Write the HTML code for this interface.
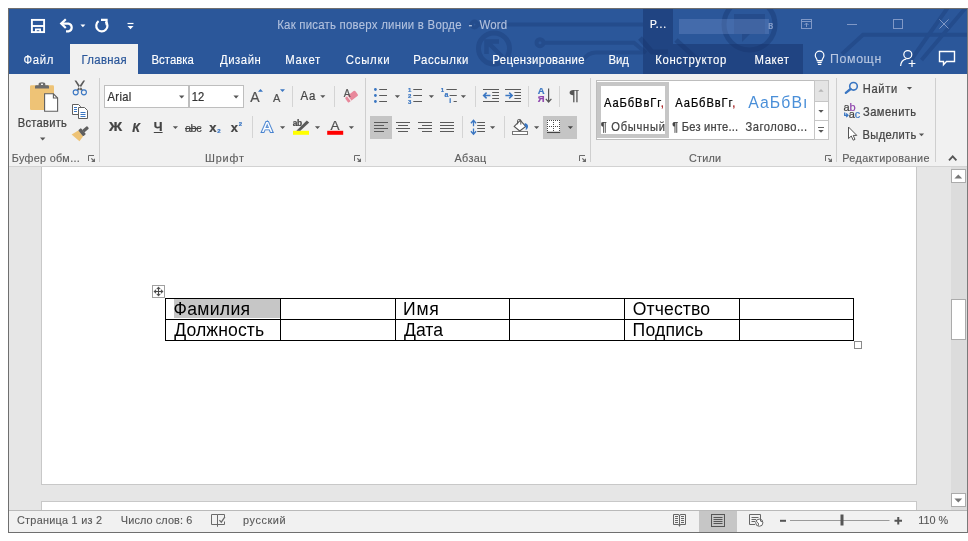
<!DOCTYPE html>
<html lang="ru">
<head>
<meta charset="utf-8">
<title>Как писать поверх линии в Ворде - Word</title>
<style>
html,body{margin:0;padding:0;background:#fff;}
body{width:968px;height:541px;position:relative;overflow:hidden;font-family:"Liberation Sans",sans-serif;}
.a{position:absolute;}
.t{position:absolute;white-space:nowrap;line-height:20px;height:20px;-webkit-text-stroke:0.22px;}
#win{position:absolute;left:8px;top:8px;width:958px;height:523px;border:1px solid #6f6f6f;border-right-color:#7a7a7a;background:#e6e6e6;}
#title{position:absolute;left:9px;top:9px;width:958px;height:65px;background:#2b579a;overflow:hidden;}
#ctx{position:absolute;left:643px;top:44px;width:160px;height:30px;background:rgba(22,50,105,.5);}
#ctx2{position:absolute;left:643px;top:9px;width:30px;height:35px;background:rgba(22,50,105,.5);}
#tab{position:absolute;left:70px;top:44px;width:68px;height:31px;background:#f1f1f1;}
#ribbon{position:absolute;left:9px;top:74px;width:958px;height:92px;background:#f1f1f1;border-bottom:1px solid #d2d2d2;}
.vs{position:absolute;width:1px;background:#d4d4d4;}
.gs{position:absolute;width:1px;background:#cfcfcf;top:78px;height:84px;}
#doc{position:absolute;left:9px;top:167px;width:958px;height:343px;background:#e6e6e6;overflow:hidden;}
#status{position:absolute;left:9px;top:510px;width:958px;height:21px;background:#f1f1f1;border-top:1px solid #b9b9b9;}
.sel{position:absolute;background:#c5c5c5;}
svg{position:absolute;overflow:visible;}
.dd{position:absolute;width:0;height:0;border-left:3px solid transparent;border-right:3px solid transparent;border-top:3px solid #666;}
</style>
</head>
<body>
<div id="win"></div>
<div id="title"><svg class="a" style="left:-9px;top:-9px;" width="968" height="541" viewBox="0 0 968 541">
  <g fill="none" stroke="#1b3d7a" opacity=".42" stroke-width="4">
    <circle cx="474.5" cy="24.5" r="3"/>
    <path d="M478 24.500H643"/>
    <circle cx="494" cy="48.500" r="15.500" stroke-width="5"/>
    <path d="M502.500 57L488 42.500M486.500 54V41.500H499" stroke-width="4.500"/>
    <circle cx="540" cy="42.700" r="3.500"/>
    <path d="M544 42.700H634L646 53"/>
    <path d="M583 60Q588 52.500 596 52.500H643"/>
    <path d="M967 34.800H863L842 54"/>
    <path d="M947.500 8L911 60M965.500 8L921.500 60"/>
  </g>
  <g fill="none" stroke="#16356e" opacity=".4" stroke-width="5">
    <circle cx="749.500" cy="24.500" r="25.500"/>
    <path d="M640 38L652 52H668M676 40L700 62"/>
  </g>
  <path d="M734 14H765V34H750L742 42V34H734Z" fill="#16356e" fill-opacity=".3"/>
</svg>
</div>
<div id="ctx"></div><div id="ctx2"></div>
<div class="a" style="left:679px;top:19px;width:90px;height:15px;background:rgba(120,150,205,.33);"></div>
<div id="tab"></div>
<div id="ribbon"></div>
<svg class="a" style="left:0;top:0;" width="968" height="541" viewBox="0 0 968 541">
  <!-- save -->
  <g fill="none" stroke="#fff" stroke-width="1.9">
    <rect x="31.900" y="19.900" width="12.200" height="12.200"/>
    <path d="M32 26H44"/>
  </g>
  <path d="M35 28.5H41V32.5H39.3V30.2H36.7V32.5H35Z" fill="#fff"/>
  <!-- undo -->
  <path d="M65.8 19.2L61.2 23.6L65.8 28" fill="none" stroke="#fff" stroke-width="2.2" stroke-linejoin="miter"/>
  <path d="M61.8 23.6H68.6A4 4 0 0 1 68.6 31.4H66" fill="none" stroke="#fff" stroke-width="2.2"/>
  <path d="M80.4 24.4h5l-2.5 2.8z" fill="#fff"/>
  <!-- redo / repeat -->
  <path d="M98.6 21.2A5.6 5.6 0 1 0 105.6 21.6" fill="none" stroke="#fff" stroke-width="2.2"/>
  <path d="M101 19.9H106.6V25.2" fill="none" stroke="#fff" stroke-width="2.1"/>
  <!-- customize -->
  <path d="M127.5 23.5H133.5" stroke="#fff" stroke-width="1.2"/>
  <path d="M127.5 26h6l-3 3.2z" fill="#fff"/>
  <!-- window controls -->
  <g fill="none" stroke="#8098c6" stroke-width="1">
    <rect x="801.5" y="19.5" width="10" height="9"/>
    <path d="M801.5 21.5H811.5M806.5 27V23M804.5 25L806.5 23L808.5 25"/>
    <path d="M847 24.5H857"/>
    <rect x="893.5" y="19.5" width="9" height="9"/>
    <path d="M939.5 19.5L948.5 28.5M948.5 19.5L939.5 28.5"/>
  </g>
  <!-- lightbulb -->
  <g fill="none" stroke="#fff" stroke-width="1.2">
    <path d="M817.2 60.6C817.2 58.6 815.3 57.8 815.3 55.4A4.3 4.3 0 0 1 823.9 55.4C823.9 57.8 822 58.6 822 60.6Z"/>
    <path d="M817.4 62.4H821.8M817.9 64.3H821.3"/>
  </g>
  <!-- share (person+) -->
  <g fill="none" stroke="#fff" stroke-width="1.200">
    <circle cx="907.8" cy="54.6" r="4"/>
    <path d="M900.6 66C900.8 62 903.6 59.4 906.4 58.8"/>
    <path d="M908.6 63.5H915.4M912 60.1V66.9"/>
  </g>
  <!-- comment -->
  <path d="M939.5 51.5H954.5V61.5H946.5L943.5 64.8V61.5H939.5Z" fill="none" stroke="#fff" stroke-width="1.4" stroke-linejoin="miter"/>
</svg>

<!-- group separators -->
<div class="gs" style="left:99px;"></div>
<div class="gs" style="left:365px;"></div>
<div class="gs" style="left:590px;"></div>
<div class="gs" style="left:836px;"></div>
<div class="gs" style="left:935px;"></div>
<!-- small separators -->
<div class="vs" style="left:292px;top:86px;height:21px;"></div>
<div class="vs" style="left:334px;top:86px;height:21px;"></div>
<div class="vs" style="left:252px;top:116px;height:22px;"></div>
<div class="vs" style="left:475px;top:86px;height:21px;"></div>
<div class="vs" style="left:528px;top:86px;height:21px;"></div>
<div class="vs" style="left:559px;top:86px;height:21px;"></div>
<div class="vs" style="left:462px;top:116px;height:22px;"></div>
<div class="vs" style="left:504px;top:116px;height:22px;"></div>
<!-- font boxes -->
<div class="a" style="left:104px;top:85px;width:83px;height:21px;background:#fff;border:1px solid #bebebe;"></div>
<div class="a" style="left:189px;top:85px;width:53px;height:21px;background:#fff;border:1px solid #bebebe;"></div>
<!-- selected buttons -->
<div class="sel" style="left:370px;top:116px;width:22px;height:23px;"></div>
<div class="sel" style="left:543px;top:116px;width:34px;height:23px;"></div>
<!-- styles gallery -->
<div class="a" style="left:596px;top:80px;width:231px;height:58px;background:#fff;border:1px solid #bdbdbd;"></div>
<div class="a" style="left:597.300px;top:82px;width:71.500px;height:55.600px;background:#c6c6c6;"></div><div class="a" style="left:601px;top:86px;width:64.200px;height:48px;background:#fff;"></div>
<div class="a" style="left:814px;top:80px;width:13px;height:20px;background:#e4e4e4;border:1px solid #c6c6c6;"></div>
<div class="a" style="left:814px;top:101px;width:13px;height:18px;background:#fff;border:1px solid #c6c6c6;"></div>
<div class="a" style="left:814px;top:120px;width:13px;height:18px;background:#fff;border:1px solid #c6c6c6;"></div>
<svg class="a" style="left:0;top:0;" width="968" height="541" viewBox="0 0 968 541">
  <!-- paste -->
  <rect x="30" y="85.3" width="24" height="24.7" rx="1.2" fill="#eec376"/>
  <path d="M35 88.6V86.6Q35 85.3 36.3 85.3H38.6V84Q38.6 82.3 42 82.3Q45.3 82.3 45.3 84V85.3H47.7Q49 85.3 49 86.6V88.6Z" fill="#6b6b6b"/>
  <rect x="41" y="83.600" width="2" height="1.400" fill="#f1f1f1"/>
  <path d="M44.6 93.8H53.4L57.6 98V111.3H44.6Z" fill="#fff" stroke="#5f5f5f" stroke-width="1.1"/>
  <path d="M53.4 93.8V98H57.6" fill="none" stroke="#5f5f5f" stroke-width="1.1"/>
  <path d="M40 137.6h5.4l-2.7 2.8z" fill="#565656"/>
  <!-- scissors -->
  <path d="M74.500 80.400H76.300L82.700 89.700L80.700 90.600ZM85.100 80.400H83.300L76.900 89.700L78.900 90.600Z" fill="#5a5a5a"/>
  <circle cx="75.700" cy="92.300" r="2.500" fill="none" stroke="#3a76c2" stroke-width="1.150"/>
  <circle cx="83.900" cy="92.300" r="2.500" fill="none" stroke="#3a76c2" stroke-width="1.150"/>
  <!-- copy -->
  <path d="M72.5 104.5H78.5L80.5 106.5V114.5H72.5Z" fill="#fff" stroke="#5f5f5f"/>
  <path d="M78.5 107.5H84.5L87.5 110.5V118.5H78.5Z" fill="#fff" stroke="#5f5f5f"/>
  <path d="M74 107.5H77M74 109.5H77M74 111.5H77M80.5 112.5H85.5M80.5 114.5H85.5M80.5 116.5H85.5" stroke="#3a76c2" stroke-width="1" fill="none"/>
  <!-- format painter -->
  <g transform="translate(81.100 133) rotate(-40)">
    <path d="M-.500-3.800L-8.200-5L-6.600 5.300L-.500 3.800Z" fill="#eec376"/>
    <rect x="-.600" y="-4" width="3.600" height="8" rx="1" fill="#5f5f5f"/>
    <rect x="2.800" y="-1.600" width="6.200" height="3.200" rx=".8" fill="#5f5f5f"/>
  </g>
  <!-- font box arrows -->
  <path d="M179 95.6h5.4l-2.7 2.8z" fill="#565656"/>
  <path d="M233.4 95.6h5.4l-2.7 2.8z" fill="#565656"/>
  <!-- grow / shrink font -->
  <path d="M258 91.7l2.5-2.8l2.5 2.8z" fill="#3a76c2"/>
  <path d="M280 89.2h5l-2.5 2.8z" fill="#3a76c2"/>
  <!-- Aa arrow -->
  <path d="M320.2 95.2h5.2l-2.6 2.8z" fill="#565656"/>
  <!-- clear formatting -->
  <g transform="rotate(-38 351.600 96.600)"><rect x="345.300" y="93.500" width="12.600" height="6.200" rx="1.300" fill="#e8889b"/><path d="M348.600 93.500V99.700" stroke="#f1f1f1" stroke-width="1"/></g>
  <!-- U arrow -->
  <path d="M172.8 126.2h5.2l-2.6 2.8z" fill="#565656"/>
  <!-- text effects arrow etc -->
  <path d="M280 126.2h5.2l-2.6 2.8z" fill="#565656"/>
  <path d="M314.9 126.2h5.2l-2.6 2.8z" fill="#565656"/>
  <path d="M348.8 126.2h5.2l-2.6 2.8z" fill="#565656"/>
  <!-- highlight -->
  <rect x="293" y="130.8" width="16" height="4" fill="#ffff00"/>
  <path d="M306.800 120.400L309.200 122.600L300.400 130.800H296.400Z" fill="#5a5a5a"/>
  <!-- font color bar -->
  <rect x="327.2" y="130.8" width="16" height="4" fill="#ff0000"/>
  <!-- launchers -->
  <path d="M88.5 161V155.500H94" stroke="#6a6a6a" fill="none"/><path d="M95 158.200V162H91.2Z" fill="#6a6a6a"/><path d="M91.3 158.300L93.5 160.500" stroke="#6a6a6a" stroke-width="1.100"/>
  <path d="M354.5 161V155.500H360" stroke="#6a6a6a" fill="none"/><path d="M361 158.200V162H357.2Z" fill="#6a6a6a"/><path d="M357.3 158.300L359.5 160.500" stroke="#6a6a6a" stroke-width="1.100"/>
  <path d="M579.5 161V155.500H585" stroke="#6a6a6a" fill="none"/><path d="M586 158.200V162H582.2Z" fill="#6a6a6a"/><path d="M582.3 158.300L584.5 160.500" stroke="#6a6a6a" stroke-width="1.100"/>
  <path d="M825.5 161V155.500H831" stroke="#6a6a6a" fill="none"/><path d="M832 158.200V162H828.2Z" fill="#6a6a6a"/><path d="M828.3 158.300L830.5 160.500" stroke="#6a6a6a" stroke-width="1.100"/>
  <!-- bullets -->
  <g fill="#3a76c2"><circle cx="375.4" cy="89.5" r="1.4"/><circle cx="375.4" cy="95.5" r="1.4"/><circle cx="375.4" cy="101.5" r="1.4"/></g>
  <path d="M379.2 89.5H387M379.2 95.5H387M379.2 101.5H387" stroke="#5a5a5a" stroke-width="1.1"/>
  <path d="M394.8 95.2h5.2l-2.6 2.8z" fill="#565656"/>
  <!-- numbering -->
  <path d="M413.3 89.5H422M413.3 95.5H422M413.3 101.5H422" stroke="#5a5a5a" stroke-width="1.1"/>
  <path d="M428.8 95.2h5.2l-2.6 2.8z" fill="#565656"/>
  <!-- multilevel -->
  <path d="M446.4 89.5H456.8M449.6 95.5H456.8M453.6 101.5H456.8" stroke="#5a5a5a" stroke-width="1.1"/>
  <path d="M460.8 95.2h5.2l-2.6 2.8z" fill="#565656"/>
  <!-- indent decrease -->
  <path d="M483 89.5H499M492.2 92.5H499M492.2 95.5H499M492.2 98.5H499M483 101.5H499" stroke="#5a5a5a" stroke-width="1.1"/>
  <path d="M483.6 95.5H490.4M486.6 92.6L483.6 95.5L486.6 98.4" stroke="#3a76c2" stroke-width="1.5" fill="none"/>
  <!-- indent increase -->
  <path d="M505 89.5H521M514.4 92.5H521M514.4 95.5H521M514.4 98.5H521M505 101.5H521" stroke="#5a5a5a" stroke-width="1.1"/>
  <path d="M505.4 95.5H512.2M509.2 92.6L512.2 95.5L509.2 98.4" stroke="#3a76c2" stroke-width="1.5" fill="none"/>
  <!-- sort arrow -->
  <path d="M548.6 88.4V102M545.8 98.8L548.6 102L551.4 98.8" stroke="#555" stroke-width="1.2" fill="none"/>
  <!-- align left -->
  <path d="M374 122.5H388M374 125.5H384M374 128.5H388M374 131.5H384" stroke="#5a5a5a" stroke-width="1.2"/>
  <path d="M396 122.5H410M398 125.5H408M396 128.5H410M398 131.5H408" stroke="#5a5a5a" stroke-width="1.2"/>
  <path d="M418 122.5H432M422 125.5H432M418 128.5H432M422 131.5H432" stroke="#5a5a5a" stroke-width="1.2"/>
  <path d="M440 122.5H454M440 125.5H454M440 128.5H454M440 131.5H454" stroke="#5a5a5a" stroke-width="1.2"/>
  <!-- line spacing -->
  <path d="M473.500 120.400V126.200M473.500 128.400V134M470.900 123.200L473.500 120.200L476.100 123.200M470.900 131.200L473.500 134.200L476.100 131.200" stroke="#3a76c2" stroke-width="1.300" fill="none"/>
  <path d="M477.2 122.5H485M477.2 125.5H485M477.2 128.5H485M477.2 131.5H485" stroke="#5a5a5a" stroke-width="1.2"/>
  <path d="M490 126.2h5.2l-2.6 2.8z" fill="#565656"/>
  <!-- shading -->
  <rect x="512.500" y="131.500" width="15" height="3" fill="#fff" stroke="#777" stroke-width="1"/>
  <path d="M520.300 120.400L525.700 126.500L519.700 131L514.200 126.400Z" fill="#fff" stroke="#555" stroke-width="1.100"/>
  <path d="M517.600 124.300V120.600Q517.600 119.500 518.600 119.500H519.800Q520.800 119.500 520.800 120.600V124.600" fill="none" stroke="#555" stroke-width="1"/>
  <path d="M524.900 122.900Q528.800 124.200 527.900 127.400Q527.200 129.400 525.600 130Q526.600 127 524.300 125.300Z" fill="#3a76c2"/>
  <path d="M534 126.200h5.200l-2.600 2.800z" fill="#565656"/>
  <!-- borders -->
  <rect x="547" y="120" width="13" height="12" fill="#fff"/>
  <g stroke="#4a4a4a" stroke-width="1" stroke-dasharray="1 1" fill="none" shape-rendering="crispEdges">
    <path d="M547 120.500H560M547 126.500H560M547.500 120V132M553.500 120V132M559.500 120V132"/>
  </g>
  <path d="M547 132.400H560.200" stroke="#444" stroke-width="1.300"/>
  <path d="M567.800 126.200h5.200l-2.600 2.800z" fill="#444"/>
  <!-- gallery scroll -->
  <path d="M818.300 91.800l2.700-2.800l2.700 2.800z" fill="#b5b5b5"/>
  <path d="M818.300 110h5.400l-2.700 2.800z" fill="#565656"/>
  <path d="M818 127.500H824" stroke="#666" stroke-width="1"/>
  <path d="M818.300 130h5.400l-2.700 2.800z" fill="#565656"/>
  <!-- find -->
  <circle cx="853.500" cy="86.300" r="3.800" fill="none" stroke="#3a76c2" stroke-width="1.600"/>
  <path d="M850.600 89L845.800 92.800" stroke="#3a76c2" stroke-width="2.300" stroke-linecap="round"/>
  <path d="M906.9 87h5.2l-2.6 2.8z" fill="#565656"/>
  <!-- replace arrow -->
  <path d="M844.700 112.600V115.300H847.600M846.200 113.500L848 115.300L846.200 117.100" stroke="#3a76c2" stroke-width="1.300" fill="none"/>
  <!-- select cursor -->
  <path d="M848.5 127V138.6L851.3 136L853.2 140.2L855 139.4L853.2 135.4H856.8Z" fill="#fff" stroke="#555" stroke-width="1"/>
  <path d="M918.9 133.4h5.2l-2.6 2.8z" fill="#565656"/>
  <!-- collapse chevron -->
  <path d="M949 160.4L952.7 156.4L956.4 160.4" fill="none" stroke="#555" stroke-width="1.8"/>
</svg>

<div id="doc">
  <div class="a" style="left:32px;top:-1px;width:874px;height:317px;background:#fff;border:1px solid #c8c8c8;"></div>
  <div class="a" style="left:32px;top:334px;width:874px;height:30px;background:#fff;border:1px solid #c8c8c8;"></div>
  <!-- scrollbar -->
  <div class="a" style="left:942px;top:0;width:16px;height:343px;background:#dcdcdc;"></div>
  <div class="a" style="left:942px;top:2px;width:13px;height:12px;background:#fff;border:1px solid #ababab;"></div>
  <div class="a" style="left:942px;top:132px;width:13px;height:39px;background:#fff;border:1px solid #ababab;"></div>
  <div class="a" style="left:942px;top:326px;width:13px;height:12px;background:#fff;border:1px solid #ababab;"></div>
</div>
<!-- table -->
<div class="a" style="left:174px;top:299px;width:106px;height:19px;background:#c6c6c6;"></div>
<svg class="a" style="left:0;top:0;" width="968" height="541" viewBox="0 0 968 541">
  <g stroke="#000" stroke-width="1" fill="none" shape-rendering="crispEdges">
    <path d="M165.5 298.5H853.5V340.5H165.5ZM165.5 319.5H853.5M280.5 298.5V340.5M395.5 298.5V340.5M509.5 298.5V340.5M624.5 298.5V340.5M739.5 298.5V340.5"/>
  </g>
  <rect x="152.5" y="285.5" width="12" height="12" fill="#fff" stroke="#a0a0a0"/>
  <path d="M154.500 291.500H162.500M158.500 287.500V295.500" stroke="#4a4a4a" stroke-width="1.100" fill="none"/>
  <path d="M158.500 286.700l-1.900 2.200h3.800zM158.500 296.300l-1.900-2.200h3.800zM153.700 291.500l2.200-1.900v3.800zM163.300 291.500l-2.200-1.900v3.800z" fill="#4a4a4a" stroke="#4a4a4a" stroke-width=".3"/>
  <rect x="854.5" y="341.5" width="7" height="7" fill="#fff" stroke="#8a8a8a"/>
</svg>
<div id="status"></div>
<div class="sel" style="left:699px;top:511px;width:38px;height:21px;background:#c6c6c6;"></div>
<svg class="a" style="left:0;top:0;" width="968" height="541" viewBox="0 0 968 541">
  <!-- scroll arrows -->
  <path d="M954.400 178.400l3.900-4l3.900 4z" fill="#777"/>
  <path d="M954.400 498.400h7.800l-3.900 4z" fill="#777"/>
  <!-- proofing -->
  <g fill="none" stroke="#6a6a6a" stroke-width="1">
    <path d="M217.500 524.500H211.500V514.500H217.500M217.500 514.500V526.800M217.500 514.500H224.500V517M224.500 521.500V524.500H217.500"/>
    <path d="M219.400 520.200L221.300 522.200L224.900 516.900" stroke-width="1.200"/>
  </g>
  <!-- read mode -->
  <g fill="none" stroke="#666" stroke-width="1">
    <path d="M679.5 516V526.5M673.5 514.5H678Q679.5 514.5 679.5 516Q679.5 514.5 681 514.5H685.500V524.5H681Q679.5 524.5 679.5 526Q679.5 524.5 678 524.5H673.5Z"/>
    <path d="M675 516.500H678M675 518.500H678M675 520.500H678M675 522.500H678M681 516.500H684M681 518.500H684M681 520.500H684M681 522.500H684"/>
  </g>
  <!-- print layout -->
  <g fill="none" stroke="#555" stroke-width="1">
    <rect x="711.5" y="514.5" width="13" height="12"/>
    <path d="M713.5 517.5H722.5M713.5 519.5H722.5M713.5 521.5H722.5M713.5 523.5H722.5"/>
  </g>
  <!-- web layout -->
  <g fill="none" stroke="#666" stroke-width="1">
    <path d="M755 524.5H749.500V514.5H760.5V519"/>
    <path d="M751.5 517.5H758.5M751.5 519.5H756M751.5 521.5H755"/>
    <circle cx="759.300" cy="522.700" r="3.600" fill="#fff"/>
    <path d="M756.5 521.5Q759 522.5 758.500 525.500M760.5 519.5Q759.500 521.5 762.5 522"/>
  </g>
  <!-- zoom -->
  <path d="M780 520.800H786" stroke="#555" stroke-width="2"/>
  <path d="M790 520.5H889.500" stroke="#9a9a9a" stroke-width="1"/>
  <rect x="840.5" y="514.5" width="3" height="11" fill="#555"/>
  <path d="M894.5 520.800H902M898.250 517V524.600" stroke="#555" stroke-width="2"/>
</svg>

<div id="tx" style="position:absolute;left:0;top:0;width:968px;height:541px;will-change:transform;">
<span class="t" style="left:23.55px;top:49.50px;font-size:11.35px;color:#fff;letter-spacing:0.650px;-webkit-text-stroke:0.12px;transform:scaleY(1.0753);">Файл</span>
<span class="t" style="left:81.50px;top:49.50px;font-size:11.35px;color:#2b579a;letter-spacing:0.317px;-webkit-text-stroke:0.2px;transform:scaleY(1.0753);">Главная</span>
<span class="t" style="left:151.50px;top:49.50px;font-size:11.35px;color:#fff;letter-spacing:0.025px;-webkit-text-stroke:0.12px;transform:scaleY(1.0753);">Вставка</span>
<span class="t" style="left:220.00px;top:49.50px;font-size:11.35px;color:#fff;letter-spacing:0.550px;-webkit-text-stroke:0.12px;transform:scaleY(1.0753);">Дизайн</span>
<span class="t" style="left:285.30px;top:49.50px;font-size:11.35px;color:#fff;letter-spacing:0.712px;-webkit-text-stroke:0.12px;transform:scaleY(1.0753);">Макет</span>
<span class="t" style="left:345.80px;top:49.50px;font-size:11.35px;color:#fff;letter-spacing:0.750px;-webkit-text-stroke:0.12px;transform:scaleY(1.0753);">Ссылки</span>
<span class="t" style="left:413.30px;top:49.50px;font-size:11.35px;color:#fff;letter-spacing:0.586px;-webkit-text-stroke:0.12px;transform:scaleY(1.0753);">Рассылки</span>
<span class="t" style="left:492.30px;top:49.50px;font-size:11.35px;color:#fff;letter-spacing:0.365px;-webkit-text-stroke:0.12px;transform:scaleY(1.0753);">Рецензирование</span>
<span class="t" style="left:608.50px;top:49.50px;font-size:11.35px;color:#fff;letter-spacing:-0.050px;-webkit-text-stroke:0.12px;transform:scaleY(1.0753);">Вид</span>
<span class="t" style="left:655.30px;top:49.50px;font-size:11.35px;color:#fff;letter-spacing:0.625px;-webkit-text-stroke:0.12px;transform:scaleY(1.0753);">Конструктор</span>
<span class="t" style="left:754.50px;top:49.50px;font-size:11.35px;color:#fff;letter-spacing:0.600px;-webkit-text-stroke:0.12px;transform:scaleY(1.0753);">Макет</span>
<span class="t" style="left:830.10px;top:49.30px;font-size:12.4px;color:#b9c7e1;letter-spacing:0.580px;-webkit-text-stroke:0.1px;">Помощн</span>
<span class="t" style="left:277.20px;top:15.30px;font-size:11.44px;color:#b3c2de;letter-spacing:0.222px;white-space:pre;-webkit-text-stroke:0.1px;transform:scaleY(1.0753);">Как писать поверх линии в Ворде  -  Word</span>
<span class="t" style="left:649.95px;top:15.20px;font-size:10.23px;color:#fff;letter-spacing:0.917px;transform:scaleY(1.0753);">Р...</span>
<span class="t" style="left:768.25px;top:16.00px;font-size:9.3px;color:#8da2cb;letter-spacing:0.000px;transform:scaleY(1.0753);">в</span>
<span class="t" style="left:17.80px;top:113.00px;font-size:11.16px;color:#444;letter-spacing:0.250px;transform:scaleY(1.0753);">Вставить</span>
<span class="t" style="left:11.75px;top:148.10px;font-size:10.8px;color:#5e5e5e;letter-spacing:0.332px;-webkit-text-stroke:0.15px;transform:none;">Буфер обм...</span>
<span class="t" style="left:107.50px;top:87.00px;font-size:11.16px;color:#333;letter-spacing:0.375px;transform:scaleY(1.0753);">Arial</span>
<span class="t" style="left:191.75px;top:87.00px;font-size:11.16px;color:#333;letter-spacing:0.150px;transform:scaleY(1.0753);">12</span>
<span class="t" style="left:204.95px;top:148.10px;font-size:10.8px;color:#5e5e5e;letter-spacing:0.875px;-webkit-text-stroke:0.15px;transform:none;">Шрифт</span>
<span class="t" style="left:454.50px;top:148.10px;font-size:10.8px;color:#5e5e5e;letter-spacing:0.375px;-webkit-text-stroke:0.15px;transform:none;">Абзац</span>
<span class="t" style="left:689.00px;top:148.10px;font-size:10.8px;color:#5e5e5e;letter-spacing:0.225px;-webkit-text-stroke:0.15px;transform:none;">Стили</span>
<span class="t" style="left:842.25px;top:148.10px;font-size:10.8px;color:#5e5e5e;letter-spacing:0.385px;-webkit-text-stroke:0.15px;transform:none;">Редактирование</span>
<span class="t" style="left:862.80px;top:78.70px;font-size:11.16px;color:#444;letter-spacing:0.625px;transform:scaleY(1.0753);">Найти</span>
<span class="t" style="left:863.00px;top:101.90px;font-size:11.16px;color:#444;letter-spacing:0.436px;transform:scaleY(1.0753);">Заменить</span>
<span class="t" style="left:862.50px;top:124.80px;font-size:11.16px;color:#444;letter-spacing:0.343px;transform:scaleY(1.0753);">Выделить</span>
<span class="t" style="left:604.00px;top:92.50px;font-size:11.16px;color:#000;letter-spacing:0.894px;transform:scaleY(1.0753);">АаБбВвГг<span style="color:#a31515">,</span></span>
<span class="t" style="left:675.30px;top:92.50px;font-size:11.16px;color:#000;letter-spacing:0.906px;transform:scaleY(1.0753);">АаБбВвГг<span style="color:#a31515">,</span></span>
<span class="t" style="left:748.20px;top:92.60px;font-size:15.81px;color:#4a8fd8;letter-spacing:1.090px;-webkit-text-stroke:0;transform:scaleY(1.0753);">АаБбВı</span>
<span class="t" style="left:600.80px;top:117.00px;font-size:11.16px;color:#444;letter-spacing:0.719px;transform:scaleY(1.0753);">¶ Обычный</span>
<span class="t" style="left:672.30px;top:117.00px;font-size:11.16px;color:#444;letter-spacing:0.196px;transform:scaleY(1.0753);">¶ Без инте...</span>
<span class="t" style="left:745.50px;top:116.80px;font-size:11.16px;color:#444;letter-spacing:0.480px;transform:scaleY(1.0753);">Заголово...</span>
<span class="t" style="left:108.50px;top:117.20px;font-size:12.5px;color:#444;letter-spacing:0.000px;font-weight:bold;transform:scaleX(1.16);transform-origin:0 50%;">Ж</span>
<span class="t" style="left:132.25px;top:117.50px;font-size:12.5px;color:#444;letter-spacing:0.000px;font-weight:bold;font-style:italic;">К</span>
<span class="t" style="left:153.80px;top:117.00px;font-size:12.5px;color:#444;letter-spacing:0.000px;font-weight:bold;text-decoration:underline;">Ч</span>
<span class="t" style="left:185.00px;top:117.50px;font-size:11px;color:#444;letter-spacing:-0.550px;text-decoration:line-through;">abc</span>
<span class="t" style="left:209.25px;top:117.50px;font-size:13px;color:#444;letter-spacing:0.000px;font-weight:bold;">x</span>
<span class="t" style="left:230.75px;top:117.50px;font-size:13px;color:#444;letter-spacing:0.000px;font-weight:bold;">x</span>
<span class="t" style="left:300.40px;top:86.00px;font-size:11.44px;color:#444;letter-spacing:0.950px;transform:scaleY(1.0753);">Aa</span>
<span class="t" style="left:17.00px;top:509.70px;font-size:10.88px;color:#585858;letter-spacing:0.257px;-webkit-text-stroke:0.12px;transform:scaleY(1.0753);">Страница 1 из 2</span>
<span class="t" style="left:120.85px;top:509.70px;font-size:10.88px;color:#585858;letter-spacing:0.108px;-webkit-text-stroke:0.12px;transform:scaleY(1.0753);">Число слов: 6</span>
<span class="t" style="left:243.05px;top:509.70px;font-size:10.88px;color:#585858;letter-spacing:0.575px;-webkit-text-stroke:0.12px;transform:scaleY(1.0753);">русский</span>
<span class="t" style="left:918.25px;top:509.70px;font-size:10.88px;color:#555;letter-spacing:-0.037px;-webkit-text-stroke:0.1px;transform:scaleY(1.0753);">110 %</span>
<span class="t" style="left:173.50px;top:299.00px;font-size:17.6px;color:#000;letter-spacing:0.317px;-webkit-text-stroke:0;">Фамилия</span>
<span class="t" style="left:403.00px;top:299.00px;font-size:17.6px;color:#000;letter-spacing:0.800px;-webkit-text-stroke:0;">Имя</span>
<span class="t" style="left:632.65px;top:299.00px;font-size:17.6px;color:#000;letter-spacing:0.136px;-webkit-text-stroke:0;">Отчество</span>
<span class="t" style="left:174.30px;top:319.50px;font-size:17.6px;color:#000;letter-spacing:0.094px;-webkit-text-stroke:0;">Должность</span>
<span class="t" style="left:404.10px;top:319.50px;font-size:17.6px;color:#000;letter-spacing:-0.017px;-webkit-text-stroke:0;">Дата</span>
<span class="t" style="left:632.60px;top:319.50px;font-size:17.6px;color:#000;letter-spacing:0.167px;-webkit-text-stroke:0;">Подпись</span>
<span class="t" style="left:250.20px;top:86.90px;font-size:14px;color:#505050;letter-spacing:0.000px;">A</span>
<span class="t" style="left:273.10px;top:87.80px;font-size:11px;color:#505050;letter-spacing:0.000px;">A</span>
<span class="t" style="left:343.80px;top:83.70px;font-size:10px;color:#555;letter-spacing:0.000px;">A</span>
<span class="t" style="left:330.40px;top:115.50px;font-size:13.5px;color:#505050;letter-spacing:0.000px;">A</span>
<span class="t" style="left:262.00px;top:116.80px;font-size:15.5px;color:#fff;letter-spacing:0.000px;-webkit-text-stroke:2.2px #3f7ccb;paint-order:stroke fill;text-shadow:0 0 2px #9fc0ec;">A</span>
<span class="t" style="left:292.75px;top:113.00px;font-size:8.3px;color:#444;letter-spacing:-0.450px;font-weight:bold;">ab</span>
<span class="t" style="left:537.65px;top:80.60px;font-size:9.5px;color:#3a76c2;letter-spacing:0.000px;font-weight:bold;">A</span>
<span class="t" style="left:537.65px;top:88.80px;font-size:9.5px;color:#8e44ad;letter-spacing:0.000px;font-weight:bold;">Я</span>
<span class="t" style="left:569.25px;top:85.20px;font-size:14.5px;color:#555;letter-spacing:0.000px;transform:scaleX(1.35);transform-origin:0 50%;-webkit-text-stroke:0.15px;">¶</span>
<span class="t" style="left:407.95px;top:79.50px;font-size:6px;color:#3a76c2;letter-spacing:0.000px;font-weight:bold;">1</span>
<span class="t" style="left:407.95px;top:85.50px;font-size:6px;color:#3a76c2;letter-spacing:0.000px;font-weight:bold;">2</span>
<span class="t" style="left:407.95px;top:91.50px;font-size:6px;color:#3a76c2;letter-spacing:0.000px;font-weight:bold;">3</span>
<span class="t" style="left:440.75px;top:79.50px;font-size:6px;color:#3a76c2;letter-spacing:0.000px;font-weight:bold;">1</span>
<span class="t" style="left:444.55px;top:85.00px;font-size:7px;color:#3a76c2;letter-spacing:0.000px;font-weight:bold;">a</span>
<span class="t" style="left:449.30px;top:91.00px;font-size:7px;color:#3a76c2;letter-spacing:0.000px;font-weight:bold;">i</span>
<span class="t" style="left:843.60px;top:97.40px;font-size:11px;color:#444;letter-spacing:0.000px;">a</span>
<span class="t" style="left:849.45px;top:97.40px;font-size:11px;color:#8e44ad;letter-spacing:0.000px;">b</span>
<span class="t" style="left:848.80px;top:104.00px;font-size:11px;color:#444;letter-spacing:0.000px;">a</span>
<span class="t" style="left:854.70px;top:104.00px;font-size:11px;color:#3a76c2;letter-spacing:0.000px;">c</span>
<span class="t" style="left:217.25px;top:120.50px;font-size:6px;color:#3a76c2;letter-spacing:0.000px;font-weight:bold;">2</span>
<span class="t" style="left:238.75px;top:113.50px;font-size:6px;color:#3a76c2;letter-spacing:0.000px;font-weight:bold;">2</span>
</div>
</body>
</html>
